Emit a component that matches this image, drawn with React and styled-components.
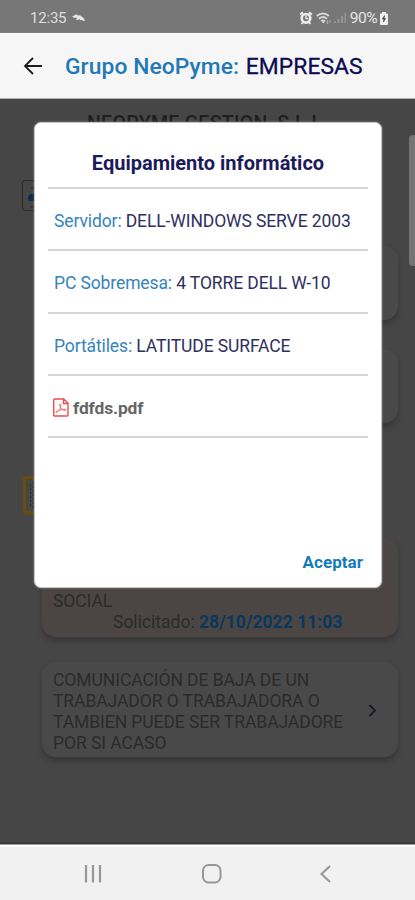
import React from "react";
import styled, { createGlobalStyle } from "styled-components";

const Global = createGlobalStyle`
  * { box-sizing: border-box; }
  body { margin: 0; background: #464646; font-family: Roboto, "Noto Sans", sans-serif; }
`;
const Screen = styled.div`
  position: relative; width: 415px; height: 900px; overflow: hidden;
  display: flex; flex-direction: column; background: #464646;
`;
const StatusBar = styled.div`
  height: 33px; flex: none; background: #777; color: #e6e6e6;
  display: flex; align-items: center; padding: 4px 27px 0 30px;
  font-size: 15px; border-bottom: 1px solid #808080;
`;
const Clock = styled.span`letter-spacing: -0.2px; margin-right: 6px; color: #dedede;`;
const StatusIcons = styled.div`
  margin-left: auto; display: flex; align-items: center; gap: 3px;
  font-size: 15.5px; letter-spacing: -0.5px;
`;
const Header = styled.header`
  height: 66px; flex: none; background: #f6f6f6; border-bottom: 1px solid #b4b4b4;
  display: flex; align-items: center; padding-left: 23px;
`;
const Title = styled.h1`
  margin: 2px 0 0 22px; font-size: 22.8px; line-height: 28px; font-weight: 500;
  letter-spacing: 0.08px; color: #2378b7; white-space: nowrap;
`;
const Company = styled.span`
  color: #0b0b52; font-weight: 400; margin-left: 1px; -webkit-text-stroke: 0.3px;
`;
const Content = styled.main`
  position: relative; flex: 1; display: flex; flex-direction: column;
  padding: 13px 17px 0 42px; color: #2b2b2b;
`;
const CompanyName = styled.div`
  height: 68px; padding-left: 45px; font-size: 19.5px; line-height: 24px; font-weight: 500;
  color: #1f1f1f; letter-spacing: 0.28px; white-space: nowrap;
`;
const PersonIcon = styled.div`
  flex: none; margin-left: -20px; width: 31px; height: 31px;
  border: 1px solid #2a2a2a; border-radius: 3px;
`;
const TaskIcon = styled.div`
  flex: none; width: 31px; height: 38px; margin: 53px 0 0 -19px;
  border: 3px solid #6a4c0c; border-radius: 2px;
`;
const Card = styled.section`
  flex: none; width: 356px; height: ${p => p.$height}; margin-top: ${p => p.$gap};
  padding: ${p => p.$padding || "0"}; border-radius: 14px;
  background: ${p => p.$warm ? "#4b4643" : "#494949"};
  box-shadow: 0 4px 7px rgba(0,0,0,.24);
  display: flex; justify-content: space-between;
  font-size: 17.5px; line-height: 21px;
`;
const Stack = styled.div`display: flex; flex-direction: column; justify-content: flex-end; flex: 1;`;
const CardText = styled.div`letter-spacing: -0.07px; white-space: nowrap;`;
const Requested = styled.div`padding-left: 60px; white-space: nowrap;`;
const RequestedDate = styled.strong`color: #08385e; font-weight: 700; letter-spacing: 0.05px;`;
const ChevronSlot = styled.div`display: flex; padding-top: 34px;`;
const ScrollThumb = styled.div`
  position: absolute; right: -2px; top: 36px; width: 8px; height: 131px;
  background: #747474; border-radius: 4px;
`;
const NavBar = styled.nav`
  height: 55px; flex: none; background: #f1f1f1; border-top: 2px solid #fbfbfb;
  box-shadow: 0 -1px 0 #a0a0a0, 0 -3px 0 #393939;
  display: flex; align-items: center; justify-content: space-between; padding: 1px 82px 0 80px;
`;
const Dialog = styled.section`
  position: absolute; left: 34px; top: 122px; width: 348px; height: 466px;
  background: #fff; border: 1px solid #c5c5c5; border-radius: 7px;
  box-shadow: 0 0 2px rgba(200,200,200,.65);
  display: flex; flex-direction: column; padding: 15px 13px 0;
`;
const DialogTitle = styled.h2`
  margin: 0; height: 51px; border-bottom: 2px solid #d5d5da; text-align: center;
  font-size: 20px; line-height: 50px; font-weight: 700; color: #1b1b5c;
`;
const Row = styled.div`
  height: 62.25px; display: flex; align-items: center; padding: 4px 5px 0 6px;
  border-bottom: 2px solid #d6d6da; font-size: 17.5px; white-space: pre; color: #30305e;
  letter-spacing: -0.11px;
`;
const Label = styled.span`color: #3684bc;`;
const FileLink = styled.span`display: flex; align-items: center; margin-left: -1px;`;
const FileName = styled.span`
  margin-left: 4px; color: #666; font-size: 17.4px; font-weight: 700;
`;
const Accept = styled.button`
  border: 0; background: none; padding: 0; margin: 112px 5px 0 auto;
  font: 700 17px/24px Roboto, sans-serif; color: #147bb9; letter-spacing: 0.05px;
`;

const Back = () => (
  <svg width="20" height="20" viewBox="0 0 20 20" fill="none" stroke="#1c1c1c" strokeWidth="1.8">
    <path d="M10 2 2 10l8 8M2 10h17" />
  </svg>
);
const Share = () => (
  <svg width="14" height="10" viewBox="0 0 14 10" fill="#e8e8e8">
    <path d="M0 3.600 4.600 1.200 5.400 2.200l3 .2 2.400 2.200 1.400 1.200.6 2.400-2-.8-2.400-.4L7.200 6 6 7 4 6.600 5 4.800H2z" />
  </svg>
);
const Alarm = () => (
  <svg width="14" height="14" viewBox="0 0 14 14">
    <path d="m1 3.500 3-2.300M13 3.500l-3-2.300M2.500 12.800l2-2M11.500 12.800l-2-2" stroke="#eee" strokeWidth="1.800" />
    <circle cx="7" cy="7.300" r="4.300" fill="#777" stroke="#eee" strokeWidth="2.600" />
    <path d="M7 4.500v3h2.300" fill="none" stroke="#eee" strokeWidth="1.300" />
  </svg>
);
const Wifi = () => (
  <svg width="15" height="13" viewBox="0 0 15 13" fill="none" stroke="#d5d5d5" strokeWidth="2">
    <path d="M.8 4c3.700-3.200 8.700-3.200 12 0M3 6.800c2.600-2.200 5.500-2.200 7.800 0" />
    <path d="m4.500 8.500 3 3 2-3c-1.500-1.300-3.300-1.300-5 0z" fill="#d5d5d5" stroke="none" />
    <path d="M11.500 8v4M14 8.500v2" stroke="#aaa" strokeWidth="1.300" />
  </svg>
);
const Signal = () => (
  <svg width="13" height="12" viewBox="0 0 13 12" fill="#959595">
    <path d="M0 9h2v2H0zM3.500 7h2v4h-2zM7 4h2v7H7zM10.500 1H12v10h-1.500z" />
  </svg>
);
const Battery = () => (
  <svg width="8" height="13" viewBox="0 0 8 13">
    <path d="M2 0h4v1.500h1a1 1 0 0 1 1 1V12a1 1 0 0 1-1 1H1a1 1 0 0 1-1-1V2.500a1 1 0 0 1 1-1h1z" fill="#eee" />
    <path d="M4.500 3.500 2.300 7h1.500l-.4 3.200 2.300-3.700H4.300z" fill="#444" stroke="#444" strokeWidth=".5" />
  </svg>
);
const Pdf = () => (
  <svg width="16" height="19" viewBox="0 0 16 19" fill="none" stroke="#f04b51" strokeWidth="1.400">
    <path d="M1.700 1h9l4.300 4.300V17a1 1 0 0 1-1 1H1.700a1 1 0 0 1-1-1V2a1 1 0 0 1 1-1zM10.500 1v4.500H15" />
    <path d="M3 14.500c3-1 5.500-5 4.700-8-.2-1-1.500-.5-1 1 1 3.300 3 5 5.300 5 1.300 0 1.400-1.300 0-1.300-3 0-6 1-8.300 2.300-.8.500-1.300.8-.7 1z" strokeWidth=".8" />
  </svg>
);
const PersonBadge = () => (
  <svg width="27" height="27" viewBox="0 0 27 27">
    <path d="M8 7h9M7 26h12" stroke="#303030" strokeWidth="1.500" />
    <path d="M5 17c0-2 1.500-4 4-4h6v7H7c-1.300 0-2-1.500-2-3z" fill="#0b2c4c" />
  </svg>
);
const ListLines = () => (
  <svg width="25" height="32" viewBox="0 0 25 32">
    <path d="M4.500 5v22M7 3v26" stroke="#2c2c2c" strokeDasharray="2 2" />
  </svg>
);
const Chevron = () => (
  <svg width="9" height="13" viewBox="0 0 9 13" fill="none" stroke="#151b22" strokeWidth="1.800">
    <path d="m1.500 1 5.500 5.500L1.500 12" />
  </svg>
);
const Recents = () => (
  <svg width="26" height="22" viewBox="0 0 26 22" stroke="#979797" strokeWidth="2.200">
    <path d="M6 2v17.500M13 2v17.500M20 2v17.500" />
  </svg>
);
const Home = () => (
  <svg width="22" height="22" viewBox="0 0 22 22" fill="none" stroke="#979797" strokeWidth="2">
    <rect x="1" y="2" width="17.500" height="17.500" rx="5.500" />
  </svg>
);
const NavBack = () => (
  <svg width="14" height="20" viewBox="0 0 14 20" fill="none" stroke="#979797" strokeWidth="2">
    <path d="m11 2-8.500 8 8.500 8" />
  </svg>
);

export default function App() {
  return (
    <>
      <Global />
      <Screen>
        <StatusBar>
          <Clock>12:35</Clock><Share />
          <StatusIcons><Alarm /><Wifi /><Signal /><span>90%</span><Battery /></StatusIcons>
        </StatusBar>
        <Header>
          <Back />
          <Title>Grupo NeoPyme: <Company>EMPRESAS</Company></Title>
        </Header>
        <Content>
          <ScrollThumb />
          <CompanyName>NEOPYME GESTION, S.L.L</CompanyName>
          <PersonIcon><PersonBadge /></PersonIcon>
          <Card $height="74px" $gap="35px" />
          <Card $height="74px" $gap="29px" />
          <TaskIcon><ListLines /></TaskIcon>
          <Card $warm $height="99px" $gap="24px" $padding="0 11px 4px">
            <Stack>
              <CardText>SOCIAL</CardText>
              <Requested>Solicitado: <RequestedDate>28/10/2022 11:03</RequestedDate></Requested>
            </Stack>
          </Card>
          <Card $height="95px" $gap="25px" $padding="8px 21px 0 11px">
            <CardText>
              COMUNICACIÓN DE BAJA DE UN<br />TRABAJADOR O TRABAJADORA O<br />
              TAMBIEN PUEDE SER TRABAJADORE<br />POR SI ACASO
            </CardText>
            <ChevronSlot><Chevron /></ChevronSlot>
          </Card>
        </Content>
        <NavBar><Recents /><Home /><NavBack /></NavBar>
        <Dialog role="dialog">
          <DialogTitle>Equipamiento informático</DialogTitle>
          <Row><Label>Servidor: </Label>DELL-WINDOWS SERVE 2003</Row>
          <Row><Label>PC Sobremesa: </Label>4 TORRE DELL W-10</Row>
          <Row><Label>Portátiles: </Label>LATITUDE SURFACE</Row>
          <Row><FileLink><Pdf /><FileName>fdfds.pdf</FileName></FileLink></Row>
          <Accept>Aceptar</Accept>
        </Dialog>
      </Screen>
    </>
  );
}
